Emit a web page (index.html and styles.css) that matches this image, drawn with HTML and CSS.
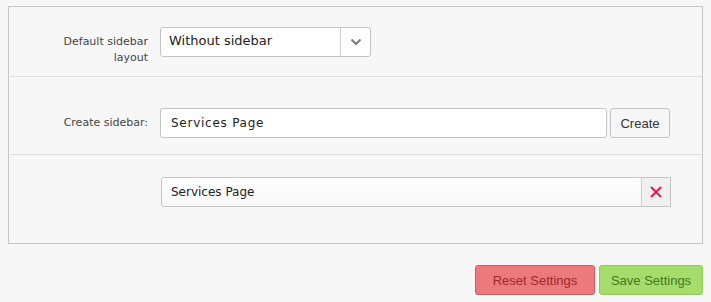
FILE: index.html
```html
<!DOCTYPE html>
<html>
	<head>
		<meta charset="UTF-8">
		<title>Sidebar settings</title>
		<link rel="stylesheet" href="styles.css">
	</head>
	<body>
		<div class="panel">
			<div class="row row-layout">
				<div class="label label-top">Default sidebar layout</div>
				<div class="select">
					<span class="select-value">Without sidebar</span>
					<span class="select-arrow">
						<svg width="12" height="8" viewBox="0 0 12 8"><path d="M1.5 1.5 L6 6 L10.5 1.5" fill="none" stroke="#7a7a7a" stroke-width="2"/></svg>
					</span>
				</div>
			</div>
			<div class="row row-create">
				<div class="label">Create sidebar:</div>
				<div class="input input-create">Services Page</div>
				<button class="btn-create">Create</button>
			</div>
			<div class="row row-list">
				<div class="label"></div>
				<div class="item">
					<span class="item-name">Services Page</span>
					<span class="item-remove">
						<svg width="12" height="12" viewBox="0 0 12 12"><path d="M1 1 L11 11 M11 1 L1 11" stroke="#e8174f" stroke-width="2"/></svg>
					</span>
				</div>
			</div>
		</div>
		<div class="footer">
			<button class="btn btn-reset">Reset Settings</button>
			<button class="btn btn-save">Save Settings</button>
		</div>
	</body>
</html>
```

FILE: styles.css
```css
*{
	margin: 0;
	padding: 0;
	box-sizing: border-box;
}
body{
	margin: 8px;
	margin-top: 6px;
	background-color: #f7f7f7;
	font-family: "DejaVu Sans", Verdana, sans-serif;
	color: #222;
}
.panel{
	border: 1px solid #c6c6c6;
	background-color: #f7f7f7;
}
.row{
	display: flex;
	align-items: center;
	margin-left: 1px;
	border-bottom: 1px solid #dddddd;
}
.row:last-child{
	border-bottom: none;
}
.row-layout{
	align-items: flex-start;
	padding: 20px 0 10px;
}
.row-create{
	padding: 31px 0 16px;
}
.row-list{
	padding: 22px 0 36px;
}
.label{
	width: 138px;
	padding-left: 40px;
	text-align: right;
	font-size: 11px;
	line-height: 16px;
	color: #444;
	margin-right: 12px;
}
.label-top{
	padding-top: 7px;
}
.select{
	display: flex;
	width: 211px;
	height: 30px;
	background-color: #fff;
	border: 1px solid #c4c4c4;
	border-radius: 3px;
}
.select-value{
	flex: 1;
	padding-left: 8px;
	font-size: 13px;
	line-height: 26px;
	color: #222;
}
.select-arrow{
	width: 30px;
	border-left: 1px solid #cfcfcf;
	display: flex;
	align-items: center;
	justify-content: center;
}
.input{
	height: 30px;
	background-color: #fff;
	border: 1px solid #c4c4c4;
	border-radius: 3px;
	font-size: 12px;
	line-height: 28px;
}
.input-create{
	width: 447px;
	padding-left: 10px;
	letter-spacing: 0.75px;
}
.btn-create{
	width: 60px;
	height: 30px;
	margin-left: 3px;
	background-color: #f6f6f6;
	border: 1px solid #c4c4c4;
	border-radius: 3px;
	font-family: "Liberation Sans", Arial, sans-serif;
	font-size: 13px;
	color: #333;
}
.item{
	display: flex;
	margin-left: 1px;
	width: 510px;
	height: 30px;
	border: 1px solid #c4c4c4;
	border-radius: 3px 0 0 3px;
	background: linear-gradient(#ffffff, #f8f8f8);
}
.item-name{
	flex: 1;
	padding-left: 9px;
	font-size: 12px;
	line-height: 28px;
}
.item-remove{
	width: 29px;
	background-color: #f0f0f0;
	border-left: 1px solid #cccccc;
	display: flex;
	align-items: center;
	justify-content: center;
}
.footer{
	display: flex;
	justify-content: flex-end;
	gap: 4px;
	margin-top: 21px;
}
.btn{
	height: 30px;
	border-radius: 3px;
	font-family: "Liberation Sans", Arial, sans-serif;
	font-size: 13px;
}
.btn-reset{
	width: 120px;
	background-color: #ec7a7d;
	border: 1px solid #d9585c;
	color: #a3262b;
}
.btn-save{
	width: 104px;
	background-color: #a5dc6b;
	border: 1px solid #8fcb56;
	color: #437a1e;
}
```
